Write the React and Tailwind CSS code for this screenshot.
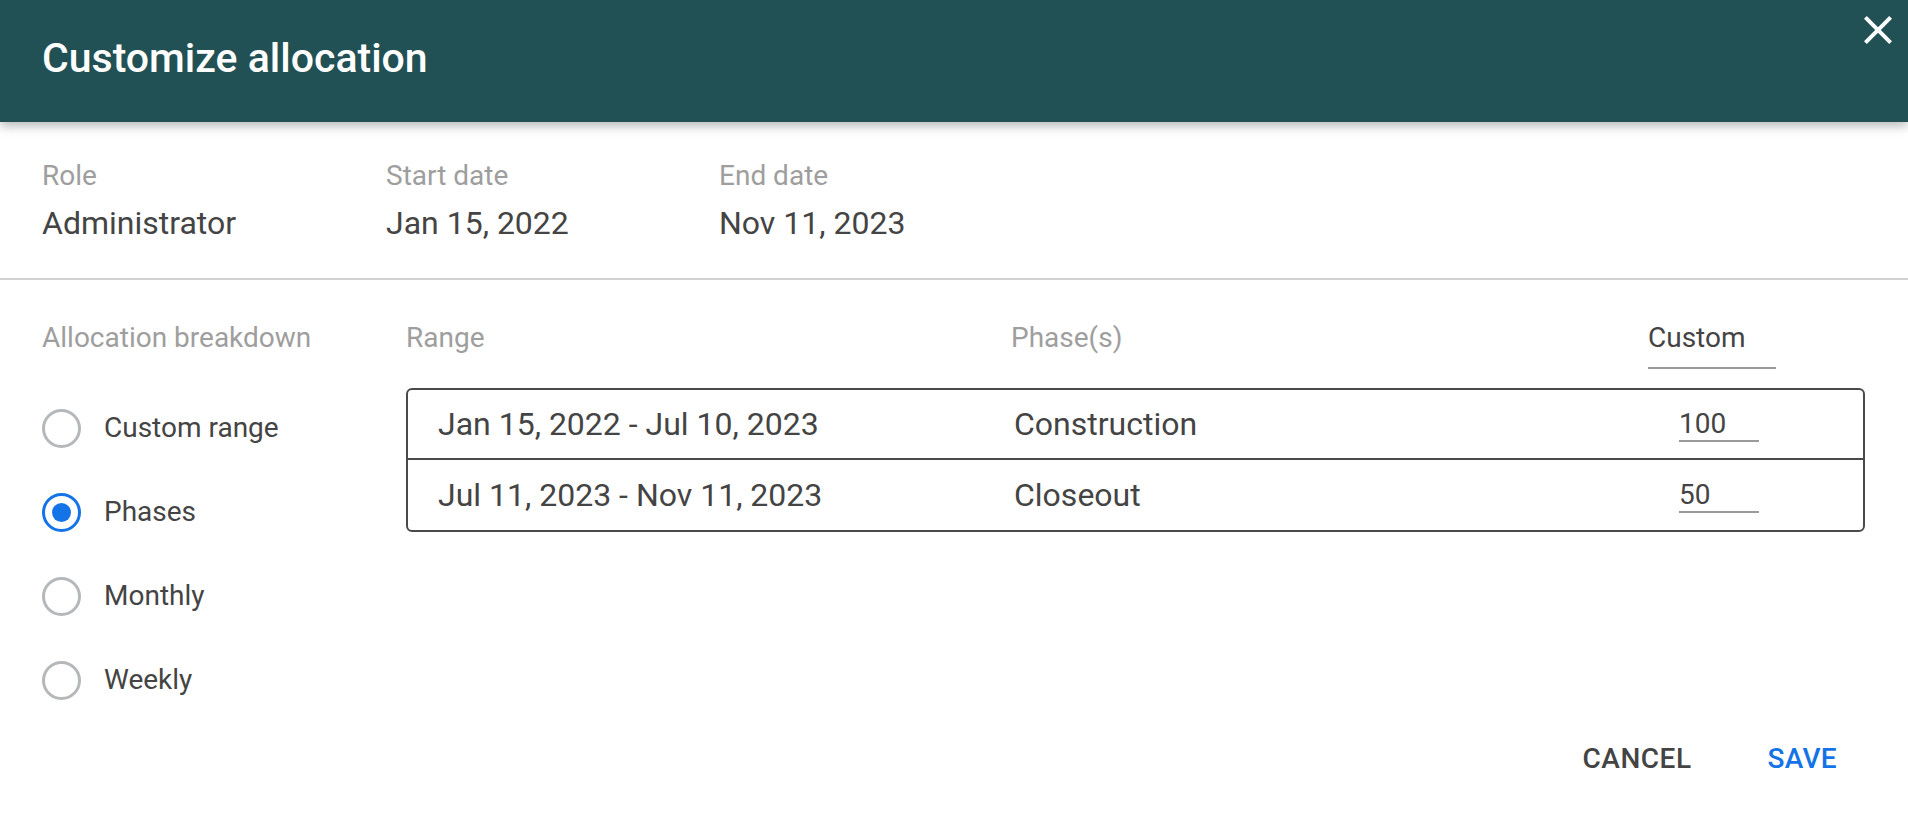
import React from "react";

function Radio({ checked, label }) {
  return (
    <div className="flex h-[84px] items-center">
      <div
        className={
          checked
            ? "flex h-[39px] w-[39px] items-center justify-center rounded-full border-[3px] border-[#1473e6]"
            : "h-[39px] w-[39px] rounded-full border-[3px] border-[#b5b8bb]"
        }
      >
        {checked && <div className="h-[19px] w-[19px] rounded-full bg-[#1473e6]" />}
      </div>
      <span className="ml-[23px] text-[28px] leading-[32px] text-[#444444]">{label}</span>
    </div>
  );
}

function Row({ range, phase, value, last }) {
  return (
    <div className={last ? "flex h-[70px] items-center pl-[30px]" : "flex h-[70px] items-center border-b-2 border-[#4a4a4a] pl-[30px]"}>
      <div className="w-[576px] text-[32px] leading-[40px] text-[#444444]">{range}</div>
      <div className="w-[665px] text-[32px] leading-[40px] text-[#444444]">{phase}</div>
      <div className="w-[80px] border-b-2 border-[#9a9a9a] pt-[2px] text-[28px] leading-[32px] text-[#444444]">
        {value}
      </div>
    </div>
  );
}

export default function App() {
  return (
    <div className="min-h-[836px] w-full bg-white font-['Roboto',sans-serif]">
      <header className="relative z-10 flex h-[122px] items-center bg-[#225155] px-[42px] pb-[6px] shadow-[0_4px_10px_rgba(0,0,0,0.28)]">
        <h1 className="text-[41px] font-medium leading-[48px] text-white">Customize allocation</h1>
        <button className="absolute right-[6px] top-[6px] text-white" aria-label="close">
          <svg width="48" height="48" viewBox="0 0 24 24" fill="currentColor">
            <path d="M19 6.41L17.59 5 12 10.59 6.41 5 5 6.41 10.59 12 5 17.59 6.41 19 12 13.41 17.59 19 19 17.59 13.41 12z" />
          </svg>
        </button>
      </header>

      <section className="flex px-[42px] pb-[35px] pt-[38px]">
        <div className="w-[344px]">
          <div className="text-[28px] leading-[32px] text-[#9e9e9e]">Role</div>
          <div className="mt-[11px] text-[32px] leading-[40px] text-[#444444]">Administrator</div>
        </div>
        <div className="w-[333px]">
          <div className="text-[28px] leading-[32px] text-[#9e9e9e]">Start date</div>
          <div className="mt-[11px] text-[32px] leading-[40px] text-[#444444]">Jan 15, 2022</div>
        </div>
        <div>
          <div className="text-[28px] leading-[32px] text-[#9e9e9e]">End date</div>
          <div className="mt-[11px] text-[32px] leading-[40px] text-[#444444]">Nov 11, 2023</div>
        </div>
      </section>

      <div className="h-[2px] bg-[#d2d2d2]" />

      <section className="flex pl-[42px] pr-[43px] pt-[42px]">
        <div className="w-[364px]">
          <div className="text-[28px] leading-[32px] text-[#9e9e9e]">Allocation breakdown</div>
          <div className="mt-[32px]">
            <Radio label="Custom range" />
            <Radio label="Phases" checked />
            <Radio label="Monthly" />
            <Radio label="Weekly" />
          </div>
        </div>
        <div className="flex-1">
          <div className="flex items-start">
            <div className="w-[605px] text-[28px] leading-[32px] text-[#9e9e9e]">Range</div>
            <div className="w-[637px] text-[28px] leading-[32px] text-[#9e9e9e]">Phase(s)</div>
            <div className="w-[128px] border-b-2 border-[#9a9a9a] pb-[13px] text-[28px] leading-[32px] text-[#444444]">
              Custom
            </div>
          </div>
          <div className="mt-[19px] rounded-[6px] border-2 border-[#4a4a4a]">
            <Row range="Jan 15, 2022 - Jul 10, 2023" phase="Construction" value="100" />
            <Row range="Jul 11, 2023 - Nov 11, 2023" phase="Closeout" value="50" last />
          </div>
        </div>
      </section>

      <div className="flex justify-end pr-[55px] pt-[13px]">
        <button className="px-[16px] py-[8px] text-[28px] font-medium leading-[32px] tracking-[0.5px] text-[#444444]">CANCEL</button>
        <button className="ml-[44px] px-[16px] py-[8px] text-[28px] font-medium leading-[32px] tracking-[0.3px] text-[#1473e6]">SAVE</button>
      </div>
    </div>
  );
}
